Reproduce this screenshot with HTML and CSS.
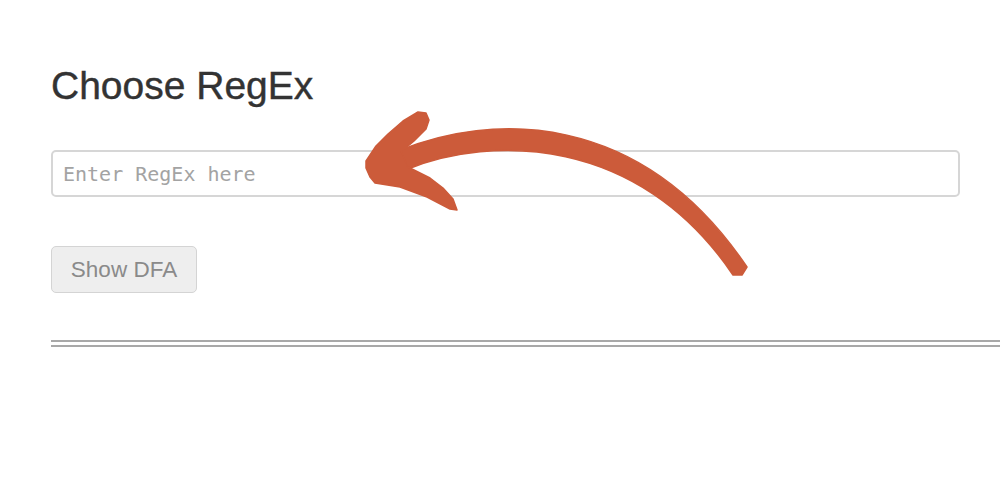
FILE: index.html
```html
<!DOCTYPE html>
<html>
<head>
<meta charset="utf-8">
<link rel="stylesheet" href="styles.css">
</head>
<body>
<main class="page">
  <h1 class="title">Choose RegEx</h1>
  <input class="regex-input" type="text" placeholder="Enter RegEx here">
  <button class="show-btn" type="button">Show DFA</button>
  <div class="divider"></div>
</main>
<svg class="arrow" width="1000" height="484" viewBox="0 0 1000 484" aria-hidden="true">
  <path class="arrow-part" d="M 398 151 C 490 113, 640 108, 747 267 L 742 275 L 733 275 C 638 134, 490 136, 408 169 Z"/>
  <path class="arrow-part" d="M 366 161 L 376 146 L 388 134 L 403 121 L 418 112 L 426 113 L 429 120 L 426 129 L 414 141 L 401 152 L 408 167 L 430 178 L 443 188 L 453 199 L 457 210 L 450 209 L 427 197 L 400 187 L 375 183 L 370 177 L 366 168 Z"/>
</svg>
</body>
</html>
```
FILE: styles.css
```css
html, body {
  margin: 0;
  padding: 0;
  background: #ffffff;
}
.page {
  padding: 64px 0 0 51px;
  display: flex;
  flex-direction: column;
  align-items: flex-start;
}
.title {
  margin: 0;
  font-family: "Liberation Sans", Arial, sans-serif;
  font-weight: normal;
  font-size: 39px;
  line-height: 44px;
  color: #333333;
  -webkit-text-stroke: 0.4px #333333;
}
.regex-input {
  margin-top: 42px;
  box-sizing: border-box;
  width: 909px;
  height: 47px;
  padding: 0 10px;
  border: 2px solid #d6d6d6;
  border-radius: 5px;
  font-family: "DejaVu Sans Mono", "Liberation Mono", monospace;
  font-size: 20px;
  color: #555;
  outline: none;
  background: #fff;
}
.regex-input::placeholder {
  color: #a3a3a3;
}
.show-btn {
  margin-top: 49px;
  box-sizing: border-box;
  width: 146px;
  height: 47px;
  padding: 0;
  border: 1px solid #d4d4d4;
  border-radius: 5px;
  background: #eeeeee;
  font-family: "Liberation Sans", Arial, sans-serif;
  font-size: 22.5px;
  color: #8a8a8a;
}
.divider {
  margin-top: 47px;
  align-self: stretch;
  height: 3px;
  border-top: 2px solid #a8a8a8;
  border-bottom: 2px solid #a8a8a8;
}
.arrow {
  position: absolute;
  left: 0;
  top: 0;
  pointer-events: none;
}
.arrow-part {
  fill: #cc5b3a;
  stroke: #cc5b3a;
  stroke-width: 1.5;
  stroke-linejoin: round;
}
```
